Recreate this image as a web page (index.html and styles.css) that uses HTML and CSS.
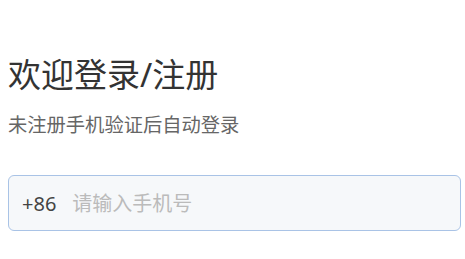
FILE: index.html
```html
<!DOCTYPE html>
<html lang="zh-CN">
<head>
<meta charset="utf-8">
<link rel="stylesheet" href="styles.css">
</head>
<body>
<main class="page">
  <h1 class="title">欢迎登录/注册</h1>
  <p class="subtitle">未注册手机验证后自动登录</p>
  <div class="phone-field">
    <span class="prefix">+86</span>
    <input class="phone-input" type="tel" placeholder="请输入手机号">
  </div>
</main>
</body>
</html>
```
FILE: styles.css
```css
html, body {
  margin: 0;
  padding: 0;
  background: #ffffff;
}
body {
  font-family: "Noto Sans", "Noto Sans CJK SC", sans-serif;
}
.page {
  padding: 55px 4px 0 8px;
}
.title {
  margin: 0;
  font-size: 33px;
  line-height: 40px;
  font-weight: 400;
  color: #333333;
}
.subtitle {
  margin: 18px 0 0;
  font-size: 19.3px;
  line-height: 24px;
  color: #666666;
}
.phone-field {
  margin-top: 38px;
  height: 56px;
  box-sizing: border-box;
  border: 1px solid #a9c3e6;
  border-radius: 6px;
  background: #f6f8fa;
  display: flex;
  align-items: center;
  padding: 0 13px;
  gap: 16px;
}
.prefix {
  font-size: 20px;
  color: #444444;
}
.phone-input {
  flex: 1;
  border: 0;
  outline: 0;
  background: transparent;
  padding: 0;
  font-family: "Noto Sans", "Noto Sans CJK SC", sans-serif;
  font-size: 20px;
  color: #333333;
}
.phone-input::placeholder {
  color: #bbbbbb;
}
```
